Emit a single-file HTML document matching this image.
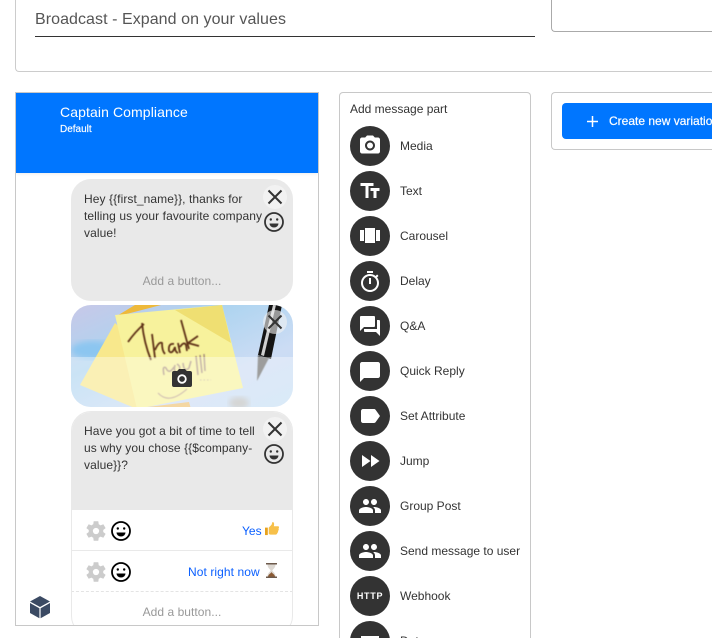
<!DOCTYPE html>
<html><head><meta charset="utf-8">
<style>
html,body{margin:0;padding:0;background:#fff;width:712px;height:638px;overflow:hidden}
#w{position:relative;width:712px;height:638px;overflow:hidden;font-family:"Liberation Sans",sans-serif;color:#333;background:#fff}
.a{position:absolute}
.t{position:absolute;white-space:nowrap}
.lab{position:absolute;left:400px;font-size:12px;line-height:16px;color:#333;white-space:nowrap}
.c{position:absolute;left:350px;width:40px;height:40px;border-radius:50%;background:#333}
.c svg{position:absolute;left:0;top:0}
.b{font-size:12px;line-height:17px;color:#333;letter-spacing:.08px}
.add{position:absolute;left:71px;width:222px;text-align:center;font-size:12px;line-height:16px;color:#999;letter-spacing:.05px}
</style></head><body><div id="w">
<div class="a" style="left:15px;top:0;width:697px;height:72px;border:1px solid #ccc;border-top:none;border-right:none;border-radius:0 0 0 4px;box-sizing:border-box"></div>
<div class="t" style="left:35px;top:10px;font-size:16px;line-height:20px;color:#555;letter-spacing:.06px">Broadcast - Expand on your values</div>
<div class="a" style="left:35px;top:36px;width:500px;height:1px;background:#333"></div>
<div class="a" style="left:551px;top:0;width:161px;height:32px;border:1px solid #aaa;border-top:none;border-right:none;border-radius:0 0 0 4px;box-sizing:border-box"></div>

<div class="a" style="left:15px;top:92px;width:304px;height:534px;border:1px solid #c8c8c8;box-sizing:border-box;overflow:hidden">
<div class="a" style="left:0;top:0;width:302px;height:80px;background:#0076ff;box-shadow:0 1px 3px rgba(0,0,0,.08)"></div>
</div>
<div class="t" style="left:60px;top:104px;font-size:14px;line-height:16px;color:#fff;letter-spacing:.1px">Captain Compliance</div>
<div class="t" style="left:60px;top:124px;font-size:10px;line-height:12px;color:#fff;-webkit-text-stroke:.15px #fff">Default</div>

<!-- bubble 1 -->
<div class="a" style="left:71px;top:179px;width:222px;height:122px;background:#e9e9e9;border-radius:20px"></div>
<div class="t b" style="left:84px;top:191px">Hey {{first_name}}, thanks for<br>telling us your favourite company<br>value!</div>
<div class="add" style="top:273px">Add a button...</div>
<svg class="a" style="left:263px;top:185px" width="24" height="24"><circle cx="12" cy="12" r="12" fill="#f2f2f2"/><path d="M5.500 5.500L18.500 18.500M18.500 5.500L5.500 18.500" stroke="#333" stroke-width="2"/></svg>
<svg class="a" style="left:263px;top:211px" width="22" height="22"><circle cx="11" cy="11" r="9" fill="none" stroke="#333" stroke-width="1.800"/><circle cx="7.800" cy="8.500" r="1.200" fill="#333"/><circle cx="14.200" cy="8.500" r="1.200" fill="#333"/><path d="M6.500 12.500h9a4.500 4 0 0 1-9 0z" fill="#333"/></svg>

<!-- image -->
<svg class="a" style="left:71px;top:305px" width="222" height="102" viewBox="0 0 222 102">
<defs>
<clipPath id="r"><rect width="222" height="102" rx="20"/></clipPath>
<linearGradient id="bg" x1="0" y1="0" x2="1" y2="1"><stop offset="0" stop-color="#c8c8e8"/><stop offset=".35" stop-color="#add4f0"/><stop offset=".7" stop-color="#ccdcf4"/><stop offset="1" stop-color="#c4def4"/></linearGradient>
<filter id="bl"><feGaussianBlur stdDeviation="3"/></filter>
<filter id="bl2"><feGaussianBlur stdDeviation=".4"/></filter>
</defs>
<g clip-path="url(#r)">
<rect width="222" height="102" fill="url(#bg)"/>
<ellipse cx="22" cy="45" rx="22" ry="9" fill="#8cc6f0" filter="url(#bl)"/>
<ellipse cx="168" cy="98" rx="10" ry="6" fill="#b8b0a4" opacity=".7" filter="url(#bl)"/>
<polygon points="64,0 90,0 44,12" fill="#eeb93a"/>
<polygon points="44,18 9,80 66,104 90,60" fill="#f8e88c"/>
<polygon points="44,10 151,0 172,83 66,104" fill="#f7f29c"/>
<polygon points="104,5 151,0 160,38" fill="#efdf72"/>
<polygon points="60,104 120,104 118,97" fill="#eec070"/>
<g filter="url(#bl2)">
<path d="M57 37Q64 27 73 19M71 18Q73 38 80 55M81 29L84 53M84 45Q88 36 91 38Q91 46 94 49M103 39Q97 38 98 46Q101 50 104 42Q104 47 107 48M107 38L109 48M109 42Q113 36 115 40L116 46M110 15L118 44M127 31L117 38L128 41" stroke="#5f3018" stroke-width="1.800" fill="none"/>
<path d="M93 70Q91 60 95 63Q98 70 103 62M104 60Q102 68 107 68Q111 62 106 59M112 58Q113 68 118 63L120 56M125 51L127 70M129 50L131 68M133 49L134 66" stroke="#a78e7a" stroke-width="1.500" fill="none"/>
<path d="M87 88Q98 100 116 84" stroke="#b89c88" stroke-width="1.100" fill="none"/>
<path d="M129 75h11" stroke="#c8b898" stroke-width="1" stroke-dasharray="1.500 2"/>
</g>
<polygon points="187,50 198,53 186,76" fill="#666" filter="url(#bl2)"/>
<polygon points="198,0 211,0 200,54 187,50" fill="#141414"/>
<polygon points="202,0 205,0 193,51 190,50" fill="#d0d0d0"/>
<rect y="52" width="222" height="50" fill="#fff" opacity=".36"/>
</g></svg>
<svg class="a" style="left:263px;top:310px" width="24" height="24"><circle cx="12" cy="12" r="12" fill="#f2f2f2" opacity=".6"/><path d="M5.500 5.500L18.500 18.500M18.500 5.500L5.500 18.500" stroke="#333" stroke-width="2"/></svg>
<svg class="a" style="left:172px;top:369px" width="20" height="18" viewBox="0 0 20 18"><path d="M7 0h6l1.800 2H18a2 2 0 0 1 2 2v12a2 2 0 0 1-2 2H2a2 2 0 0 1-2-2V4a2 2 0 0 1 2-2h3.200z" fill="#333"/><circle cx="10" cy="10" r="3.800" fill="none" stroke="#fff" stroke-width="1.800"/></svg>

<!-- bubble 3 -->
<div class="a" style="left:71px;top:411px;width:222px;height:225px;box-sizing:border-box;border:1px solid #e9e9e9;border-radius:20px;background:#fff;overflow:hidden">
<div class="a" style="left:-1px;top:-1px;width:222px;height:99px;background:#e9e9e9"></div>
<div class="a" style="left:-1px;top:138px;width:222px;height:1px;background:#e9e9e9"></div>
<div class="a" style="left:-1px;top:179px;width:222px;height:0;border-top:1px dashed #e4e4e4"></div>
</div>
<div class="a" style="left:15px;top:625px;width:304px;height:1px;background:#c8c8c8"></div>
<div class="a" style="left:15px;top:626px;width:310px;height:12px;background:#fff"></div>
<div class="t b" style="left:84px;top:423px">Have you got a bit of time to tell<br>us why you chose {{$company-<br>value}}?</div>
<svg class="a" style="left:263px;top:417px" width="24" height="24"><circle cx="12" cy="12" r="12" fill="#f2f2f2"/><path d="M5.500 5.500L18.500 18.500M18.500 5.500L5.500 18.500" stroke="#333" stroke-width="2"/></svg>
<svg class="a" style="left:263px;top:443px" width="22" height="22"><circle cx="11" cy="11" r="9" fill="none" stroke="#333" stroke-width="1.800"/><circle cx="7.800" cy="8.500" r="1.200" fill="#333"/><circle cx="14.200" cy="8.500" r="1.200" fill="#333"/><path d="M6.500 12.500h9a4.500 4 0 0 1-9 0z" fill="#333"/></svg>

<svg class="a" style="left:85px;top:520px" width="22" height="22" viewBox="2 1.500 21 21"><path fill="#ccc" d="M19.400 13a7.500 7.500 0 0 0 0-2l2.300-1.700-2.200-3.800-2.700 1.100a7.500 7.500 0 0 0-1.700-1L14.700 2.700h-4.400l-.4 2.900a7.500 7.500 0 0 0-1.700 1L5.500 5.500 3.300 9.300 5.600 11a7.500 7.500 0 0 0 0 2l-2.300 1.700 2.200 3.800 2.700-1.100a7.500 7.500 0 0 0 1.700 1l.4 2.900h4.400l.4-2.900a7.500 7.500 0 0 0 1.700-1l2.700 1.100 2.200-3.800zM12.500 15a3 3 0 1 1 0-6 3 3 0 0 1 0 6z"/></svg>
<svg class="a" style="left:110px;top:520px" width="22" height="22"><circle cx="11" cy="11" r="9" fill="none" stroke="#000" stroke-width="1.800"/><circle cx="7.800" cy="8.500" r="1.200"/><circle cx="14.200" cy="8.500" r="1.200"/><path d="M6.500 12.500h9a4.500 4 0 0 1-9 0z"/></svg>
<div class="t" style="left:242px;top:523px;font-size:12px;line-height:16px;color:#0a5fff">Yes</div>
<svg class="a" style="left:265px;top:522px" width="14" height="14" viewBox="0 0 15 15"><path d="M0 6h3v8H0z" fill="#e8a21c"/><path d="M4 6l3-3 1-3c2 0 2 2 1.500 4.500H14c1.500 0 1 2 .5 2.500.5 1 .2 2-.5 2.500.2 1-.2 2-.8 2.200 0 1-.7 1.800-1.700 1.800H6c-1 0-2-.5-2-1z" fill="#f7c04a"/></svg>

<svg class="a" style="left:85px;top:561px" width="22" height="22" viewBox="2 1.500 21 21"><path fill="#ccc" d="M19.400 13a7.500 7.500 0 0 0 0-2l2.300-1.700-2.200-3.800-2.700 1.100a7.500 7.500 0 0 0-1.700-1L14.700 2.700h-4.400l-.4 2.900a7.500 7.500 0 0 0-1.700 1L5.500 5.500 3.300 9.300 5.600 11a7.500 7.500 0 0 0 0 2l-2.300 1.700 2.200 3.800 2.700-1.100a7.500 7.500 0 0 0 1.700 1l.4 2.900h4.400l.4-2.900a7.500 7.500 0 0 0 1.700-1l2.700 1.100 2.200-3.800zM12.500 15a3 3 0 1 1 0-6 3 3 0 0 1 0 6z"/></svg>
<svg class="a" style="left:110px;top:561px" width="22" height="22"><circle cx="11" cy="11" r="9" fill="none" stroke="#000" stroke-width="1.800"/><circle cx="7.800" cy="8.500" r="1.200"/><circle cx="14.200" cy="8.500" r="1.200"/><path d="M6.500 12.500h9a4.500 4 0 0 1-9 0z"/></svg>
<div class="t" style="left:188px;top:564px;font-size:12px;line-height:16px;color:#0a5fff;letter-spacing:.08px">Not right now</div>
<svg class="a" style="left:265px;top:563px" width="13" height="15" viewBox="0 0 13 15"><rect x="1" y="0" width="11" height="1.500" fill="#6d5a4c"/><rect x="1" y="13.500" width="11" height="1.500" fill="#6d5a4c"/><path d="M2.500 1.500h8C10.500 5 8 6 7.300 7.500 8 9 10.500 10 10.500 13.500h-8C2.500 10 5 9 5.700 7.500 5 6 2.500 5 2.500 1.500z" fill="#ddd8d2"/><path d="M3 13.500C3.500 11 6 10.500 6.500 9c.5 1.500 3 2 3.500 4.500z" fill="#8a5a34"/></svg>
<div class="add" style="top:604px">Add a button...</div>

<svg class="a" style="left:29px;top:595px" width="22" height="24" viewBox="0 0 22 24"><path d="M11 1l10 5.500L11 12 1 6.500z" fill="#3b4a63"/><path d="M1 8l9.400 5.200v10L1 18z" fill="#3b4a63"/><path d="M21 8l-9.400 5.200v10L21 18z" fill="#3b4a63"/></svg>

<!-- add message part -->
<div class="a" style="left:339px;top:92px;width:192px;height:546px;border:1px solid #c8c8c8;border-bottom:none;border-radius:4px 4px 0 0;box-sizing:border-box"></div>
<div class="t" style="left:350px;top:101px;font-size:12px;line-height:16px;color:#333">Add message part</div>

<div class="c" style="top:126px"><svg width="40" height="40"><g transform="translate(8,7.500)" fill="#fff"><circle cx="12" cy="12" r="3"/><path d="M9 2L7.170 4H4c-1.100 0-2 .9-2 2v12c0 1.100.9 2 2 2h16c1.100 0 2-.9 2-2V6c0-1.100-.9-2-2-2h-3.170L15 2H9zm3 15c-2.760 0-5-2.240-5-5s2.240-5 5-5 5 2.240 5 5-2.240 5-5 5z"/></g></svg></div>
<div class="lab" style="top:138px">Media</div>

<div class="c" style="top:171px"><svg width="40" height="40"><g transform="translate(8,8)" fill="#fff"><path d="M2.500 4v3h5v12h3V7h5V4h-13zm19 5h-9v3h3v7h3v-7h3V9z"/></g></svg></div>
<div class="lab" style="top:183px">Text</div>

<div class="c" style="top:216px"><svg width="40" height="40"><g transform="translate(8,8)" fill="#fff"><path d="M7 19h10V4H7v15zm-5-2h4V6H2v11zm16-11v11h4V6h-4z"/></g></svg></div>
<div class="lab" style="top:228px">Carousel</div>

<div class="c" style="top:261px"><svg width="40" height="40"><g transform="translate(8,9)" fill="#fff"><path d="M15 1H9v2h6V1zm-4 13h2V8h-2v6zm8.030-6.610l1.420-1.420c-.43-.51-.9-.99-1.410-1.410l-1.420 1.420C16.070 4.740 14.120 4 12 4c-4.970 0-9 4.030-9 9s4.020 9 9 9 9-4.030 9-9c0-2.120-.74-4.070-1.970-5.610zM12 20c-3.870 0-7-3.130-7-7s3.130-7 7-7 7 3.130 7 7-3.130 7-7 7z"/></g></svg></div>
<div class="lab" style="top:273px">Delay</div>

<div class="c" style="top:306px"><svg width="40" height="40"><g transform="translate(8,8)" fill="#fff"><path d="M21 6h-2v9H6v2c0 .55.45 1 1 1h11l4 4V7c0-.55-.45-1-1-1zm-4 6V3c0-.55-.45-1-1-1H3c-.55 0-1 .45-1 1v14l4-4h10c.55 0 1-.45 1-1z"/></g></svg></div>
<div class="lab" style="top:318px">Q&amp;A</div>

<div class="c" style="top:351px"><svg width="40" height="40"><g transform="translate(8,9)" fill="#fff"><path d="M20 2H4c-1.100 0-2 .9-2 2v18l4-4h14c1.100 0 2-.9 2-2V4c0-1.100-.9-2-2-2z"/></g></svg></div>
<div class="lab" style="top:363px">Quick Reply</div>

<div class="c" style="top:396px"><svg width="40" height="40"><g transform="translate(8,8)" fill="#fff"><path d="M17.630 5.840C17.270 5.330 16.670 5 16 5L5 5.010C3.900 5.010 3 5.900 3 7v10c0 1.100.9 1.990 2 1.990L16 19c.67 0 1.270-.33 1.630-.84L22 12l-4.370-6.160z"/></g></svg></div>
<div class="lab" style="top:408px">Set Attribute</div>

<div class="c" style="top:441px"><svg width="40" height="40"><g transform="translate(8,8)" fill="#fff"><path d="M4 18l8.500-6L4 6v12zm9-12v12l8.500-6L13 6z"/></g></svg></div>
<div class="lab" style="top:453px">Jump</div>

<div class="c" style="top:486px"><svg width="40" height="40"><g transform="translate(8,8)" fill="#fff"><path d="M16 11c1.660 0 2.990-1.340 2.990-3S17.660 5 16 5c-1.660 0-3 1.340-3 3s1.340 3 3 3zm-8 0c1.660 0 2.990-1.340 2.990-3S9.660 5 8 5C6.340 5 5 6.340 5 8s1.340 3 3 3zm0 2c-2.330 0-7 1.170-7 3.500V19h14v-2.500c0-2.330-4.670-3.500-7-3.500zm8 0c-.29 0-.62.02-.97.05 1.160.84 1.970 1.970 1.970 3.450V19h6v-2.500c0-2.330-4.670-3.500-7-3.500z"/></g></svg></div>
<div class="lab" style="top:498px">Group Post</div>

<div class="c" style="top:531px"><svg width="40" height="40"><g transform="translate(8,8)" fill="#fff"><path d="M16 11c1.660 0 2.990-1.340 2.990-3S17.660 5 16 5c-1.660 0-3 1.340-3 3s1.340 3 3 3zm-8 0c1.660 0 2.990-1.340 2.990-3S9.660 5 8 5C6.340 5 5 6.340 5 8s1.340 3 3 3zm0 2c-2.330 0-7 1.170-7 3.500V19h14v-2.500c0-2.330-4.670-3.500-7-3.500zm8 0c-.29 0-.62.02-.97.05 1.160.84 1.970 1.970 1.970 3.450V19h6v-2.500c0-2.330-4.670-3.500-7-3.500z"/></g></svg></div>
<div class="lab" style="top:543px">Send message to user</div>

<div class="c" style="top:576px"><div class="t" style="left:0;width:40px;text-align:center;top:14px;font-size:9px;line-height:12px;font-weight:bold;color:#fff;letter-spacing:.7px">HTTP</div></div>
<div class="lab" style="top:588px">Webhook</div>

<svg class="a" style="left:350px;top:621px" width="40" height="17"><circle cx="20" cy="20" r="20" fill="#333"/><rect x="11" y="15" width="18" height="2" fill="#fff"/></svg>
<div class="lab" style="top:633px;height:5px;overflow:hidden">Data</div>

<!-- right -->
<div class="a" style="left:551px;top:92px;width:161px;height:58px;border:1px solid #c8c8c8;border-right:none;border-radius:4px 0 0 4px;box-sizing:border-box"></div>
<div class="a" style="left:562px;top:103px;width:150px;height:36px;background:#0076ff;border-radius:4px 0 0 4px;overflow:hidden">
<svg class="a" style="left:25px;top:13px" width="11" height="11"><path d="M5.500 0v11M0 5.500h11" stroke="#fff" stroke-width="1.500"/></svg>
<div class="t" style="left:47px;top:10px;font-size:12px;line-height:16px;color:#fff;-webkit-text-stroke:.2px #fff">Create new variation</div>
</div>
</div></body></html>
